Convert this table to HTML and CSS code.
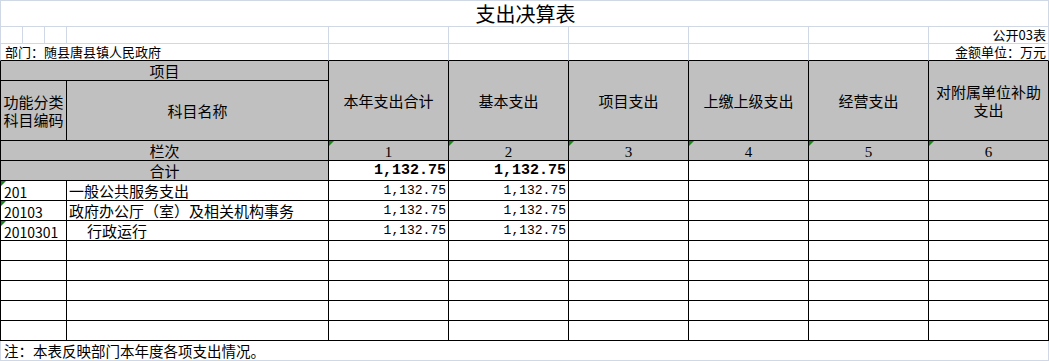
FILE: index.html
```html
<!DOCTYPE html>
<html lang="zh-CN">
<head>
<meta charset="utf-8">
<title>支出决算表</title>
<link rel="stylesheet" href="styles.css">
</head>
<body>
<div class="sheet">
  <div class="cell title lf">支出决算表</div>

  <div class="cell lf"></div>
  <div class="cell"></div>
  <div class="cell"></div>
  <div class="cell"></div>
  <div class="cell"></div>
  <div class="cell"></div>
  <div class="cell"></div>
  <div class="cell"></div>
  <div class="cell"></div>
  <div class="cell small right">公开03表</div>

  <div class="cell lf small dept bb">部门：随县唐县镇人民政府</div>
  <div class="cell bb"></div>
  <div class="cell bb"></div>
  <div class="cell bb"></div>
  <div class="cell bb"></div>
  <div class="cell bb"></div>
  <div class="cell small right bb">金额单位：万元</div>

  <div class="cell k lfk hd center span-item">项目</div>
  <div class="cell k hd center tall">本年支出合计</div>
  <div class="cell k hd center tall">基本支出</div>
  <div class="cell k hd center tall">项目支出</div>
  <div class="cell k hd center tall">上缴上级支出</div>
  <div class="cell k hd center tall">经营支出</div>
  <div class="cell k hd center tall two"><span class="ln">对附属单位补助</span><span class="ln">支出</span></div>
  <div class="cell k lfk hd center code-col two"><span class="ln">功能分类</span><span class="ln">科目编码</span></div>
  <div class="cell k hd center">科目名称</div>

  <div class="cell k lfk hd center span-item">栏次</div>
  <div class="cell k hd center num-h mark">1</div>
  <div class="cell k hd center num-h mark">2</div>
  <div class="cell k hd center num-h mark">3</div>
  <div class="cell k hd center num-h mark">4</div>
  <div class="cell k hd center num-h mark">5</div>
  <div class="cell k hd center num-h mark">6</div>

  <div class="cell k lfk hd center span-item">合计</div>
  <div class="cell k amt bold">1,132.75</div>
  <div class="cell k amt bold">1,132.75</div>
  <div class="cell k"></div>
  <div class="cell k"></div>
  <div class="cell k"></div>
  <div class="cell k"></div>

  <div class="cell k lfk code code-col mark">201</div>
  <div class="cell k name">一般公共服务支出</div>
  <div class="cell k amt">1,132.75</div>
  <div class="cell k amt">1,132.75</div>
  <div class="cell k"></div>
  <div class="cell k"></div>
  <div class="cell k"></div>
  <div class="cell k"></div>

  <div class="cell k lfk code code-col mark">20103</div>
  <div class="cell k name">政府办公厅（室）及相关机构事务</div>
  <div class="cell k amt">1,132.75</div>
  <div class="cell k amt">1,132.75</div>
  <div class="cell k"></div>
  <div class="cell k"></div>
  <div class="cell k"></div>
  <div class="cell k"></div>

  <div class="cell k lfk code code-col mark">2010301</div>
  <div class="cell k name indent">行政运行</div>
  <div class="cell k amt">1,132.75</div>
  <div class="cell k amt">1,132.75</div>
  <div class="cell k"></div>
  <div class="cell k"></div>
  <div class="cell k"></div>
  <div class="cell k"></div>

  <div class="cell k lfk code-col"></div><div class="cell k"></div><div class="cell k"></div><div class="cell k"></div><div class="cell k"></div><div class="cell k"></div><div class="cell k"></div><div class="cell k"></div>
  <div class="cell k lfk code-col"></div><div class="cell k"></div><div class="cell k"></div><div class="cell k"></div><div class="cell k"></div><div class="cell k"></div><div class="cell k"></div><div class="cell k"></div>
  <div class="cell k lfk code-col"></div><div class="cell k"></div><div class="cell k"></div><div class="cell k"></div><div class="cell k"></div><div class="cell k"></div><div class="cell k"></div><div class="cell k"></div>
  <div class="cell k lfk code-col"></div><div class="cell k"></div><div class="cell k"></div><div class="cell k"></div><div class="cell k"></div><div class="cell k"></div><div class="cell k"></div><div class="cell k"></div>
  <div class="cell k lfk code-col"></div><div class="cell k"></div><div class="cell k"></div><div class="cell k"></div><div class="cell k"></div><div class="cell k"></div><div class="cell k"></div><div class="cell k"></div>

  <div class="cell lf note">注：本表反映部门本年度各项支出情况。</div>
</div>
</body>
</html>
```

FILE: styles.css
```css
html, body {
  margin: 0;
  padding: 0;
  background: #ffffff;
}

.sheet {
  display: grid;
  grid-template-columns: 23px 22px 22px 262px repeat(6, 120px);
  grid-template-rows: 27px 17px 17px 20px 60px 20px 20px repeat(8, 20px) 20px;
  width: 1049px;
  font-family: "Noto Sans CJK SC", "Noto Sans", sans-serif;
  color: #000;
}

.cell {
  box-sizing: border-box;
  border-right: 1px solid #d0d7e5;
  border-bottom: 1px solid #d0d7e5;
  display: flex;
  align-items: center;
  font-size: 15px;
  line-height: 18px;
  white-space: nowrap;
  position: relative;
  min-width: 0;
}

.lf { border-left: 1px solid #d0d7e5; }
.bb { border-bottom-color: #000; }

.k {
  border-right-color: #000;
  border-bottom-color: #000;
}
.lfk { border-left: 1px solid #000; }

.title {
  grid-column: 1 / -1;
  border-top: 1px solid #d0d7e5;
  justify-content: center;
  font-size: 20px;
  padding-left: 2px;
}

.small {
  font-size: 13px;
  line-height: 16px;
}
.right {
  justify-content: flex-end;
  padding-right: 2px;
}
.dept {
  grid-column: 1 / 5;
  padding-left: 4px;
}

.hd { background: #c0c0c0; }
.center {
  justify-content: center;
  text-align: center;
}
.span-item { grid-column: 1 / 5; }
.tall { grid-row: span 2; }
.two {
  flex-direction: column;
  justify-content: center;
  align-items: center;
}
.ln {
  display: block;
  height: 18px;
  line-height: 18px;
}
.code-col { grid-column: 1 / 4; }

.num-h {
  font-family: "Liberation Serif", "Noto Sans CJK SC", serif;
  font-size: 15px;
  padding-top: 2px;
}

.amt {
  justify-content: flex-end;
  padding-right: 2px;
  font-family: "Liberation Mono", "DejaVu Sans Mono", monospace;
  font-size: 13px;
}
.amt.bold {
  font-weight: bold;
  font-size: 15px;
}

.code {
  padding-left: 3px;
  font-size: 14px;
  padding-top: 2px;
}
.name {
  padding-left: 2px;
  padding-top: 1px;
}
.indent { padding-left: 20px; }

.mark::before {
  content: "";
  position: absolute;
  left: 0;
  top: 0;
  width: 0;
  height: 0;
  border-top: 5px solid #138a13;
  border-right: 5px solid transparent;
}

.note {
  grid-column: 1 / -1;
  padding-left: 3px;
  font-size: 14.5px;
}
```
